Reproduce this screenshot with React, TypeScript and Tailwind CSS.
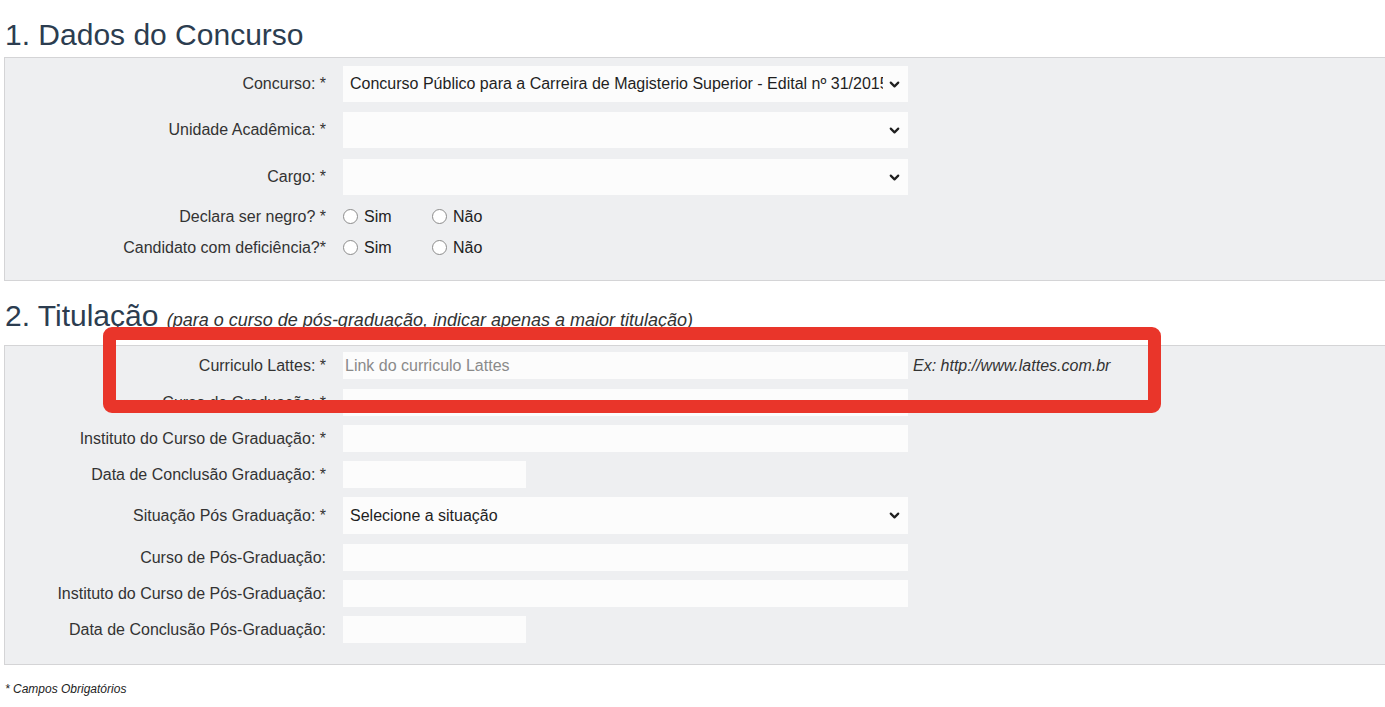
import { ChevronDown } from 'lucide-react'

const font = { fontFamily: '"Liberation Sans", Arial, Helvetica, sans-serif' }

function Label({ text }: { text: string }) {
  return (
    <div className="w-[322px] shrink-0 pr-[1px] text-right text-[16px] text-[#333] whitespace-nowrap">{text}</div>
  )
}

function SelectBox({ value, h = 'h-[36px]' }: { value?: string; h?: string }) {
  return (
    <div
      className={`${h} w-[565px] bg-[#fcfcfc] flex items-center pl-[7px] pr-[6px] text-[16px] text-[#1f1f1f] overflow-hidden`}
    >
      <span className="flex-1 whitespace-nowrap overflow-hidden mr-[4px]">{value}</span>
      <ChevronDown size={15} strokeWidth={3.5} className="shrink-0 text-[#1f1f1f]" />
    </div>
  )
}

function TextBox({ placeholder, wide = true }: { placeholder?: string; wide?: boolean }) {
  return (
    <div
      className={`h-[27px] ${wide ? 'w-[565px]' : 'w-[183px]'} bg-[#fcfcfc] flex items-center pl-[2px] text-[16px] text-[#8a8a8a]`}
    >
      {placeholder}
    </div>
  )
}

function Radio({ label }: { label: string }) {
  return (
    <div className="flex items-center gap-[6px] w-[89px]">
      <span className="w-[15px] h-[15px] rounded-full border border-[#8c8c8c] bg-white shrink-0" />
      <span className="text-[16px] text-[#222]">{label}</span>
    </div>
  )
}

function Row({ label, children, className = '' }: { label: string; children: React.ReactNode; className?: string }) {
  return (
    <div className={`flex items-center gap-[16px] ${className}`}>
      <Label text={label} />
      {children}
    </div>
  )
}

export default function App() {
  return (
    <div className="relative w-[1385px] h-[707px] overflow-hidden bg-white" style={font}>
      {/* 1. Dados do Concurso */}
      <h2 className="pt-[17px] pl-[5px] text-[30px] leading-[36px] mb-[4px] text-[#2c3d50] font-normal">
        1. Dados do Concurso
      </h2>
      <div className="ml-[4px] border border-r-0 border-[#d4d4d6] bg-[#eeeff1] pt-[8px] pb-[17px]">
        <Row label="Concurso: *">
          <SelectBox value="Concurso Público para a Carreira de Magisterio Superior - Edital nº 31/2015" />
        </Row>
        <Row label="Unidade Acadêmica: *" className="mt-[10px]">
          <SelectBox />
        </Row>
        <Row label="Cargo: *" className="mt-[11px]">
          <SelectBox />
        </Row>
        <Row label="Declara ser negro? *" className="h-[31px] mt-[6px]">
          <div className="flex">
            <Radio label="Sim" />
            <Radio label="Não" />
          </div>
        </Row>
        <Row label="Candidato com deficiência?*" className="h-[31px]">
          <div className="flex">
            <Radio label="Sim" />
            <Radio label="Não" />
          </div>
        </Row>
      </div>

      {/* 2. Titulação */}
      <h2 className="mt-[17px] pl-[5px] text-[30px] leading-[36px] mb-[7px] text-[#2c3d50] font-normal whitespace-nowrap">
        2. Titulação{' '}
        <span className="text-[18px] italic text-[#333]">
          (para o curso de pós-graduação, indicar apenas a maior titulação)
        </span>
      </h2>
      <div className="ml-[4px] border border-r-0 border-[#d4d4d6] bg-[#eeeff1] pt-[6px] pb-[21px]">
        <Row label="Curriculo Lattes: *">
          <TextBox placeholder="Link do curriculo Lattes" />
          <span className="ml-[-11px] text-[16px] italic text-[#333]">Ex: http://www.lattes.com.br</span>
        </Row>
        <Row label="Curso de Graduação: *" className="mt-[10px]">
          <TextBox />
        </Row>
        <Row label="Instituto do Curso de Graduação: *" className="mt-[9px]">
          <TextBox />
        </Row>
        <Row label="Data de Conclusão Graduação: *" className="mt-[9px]">
          <TextBox wide={false} />
        </Row>
        <Row label="Situação Pós Graduação: *" className="mt-[9px]">
          <SelectBox value="Selecione a situação" h="h-[37px]" />
        </Row>
        <Row label="Curso de Pós-Graduação:" className="mt-[10px]">
          <TextBox />
        </Row>
        <Row label="Instituto do Curso de Pós-Graduação:" className="mt-[9px]">
          <TextBox />
        </Row>
        <Row label="Data de Conclusão Pós-Graduação:" className="mt-[9px]">
          <TextBox wide={false} />
        </Row>
      </div>

      <p className="mt-[16px] pl-[5px] text-[12px] leading-[16px] italic text-[#222]">* Campos Obrigatórios</p>

      {/* highlight annotation */}
      <div className="absolute left-[103px] top-[327px] w-[1058px] h-[86px] border-[13px] border-[#e9352a] rounded-[9px]" />
    </div>
  )
}
